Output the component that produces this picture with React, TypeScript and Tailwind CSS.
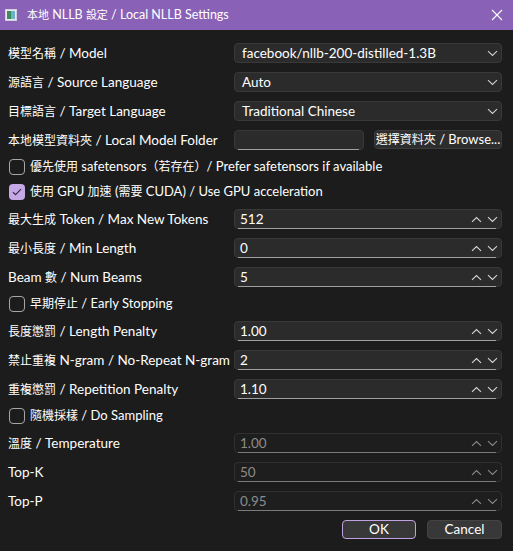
const FONT = "font-['Lato','Noto_Sans_CJK_TC',sans-serif]";

// CJK runs render a little smaller than the Latin text in the reference
function T({ text, cjk = "text-[12px]" }: { text: string; cjk?: string }) {
  const parts = text.split(/([\u3000-\u9fff\uff00-\uffef]+)/);
  return (
    <>
      {parts.map((p, i) =>
        i % 2 === 1 ? (
          <span key={i} className={cjk}>
            {p}
          </span>
        ) : (
          <span key={i}>{p}</span>
        )
      )}
    </>
  );
}

function ChevronDown({ className = "" }: { className?: string }) {
  return (
    <svg width="11" height="7" viewBox="0 0 11 7" className={className}>
      <path d="M1 1.2 L5.5 5.5 L10 1.2" fill="none" stroke="currentColor" strokeWidth="1.1" />
    </svg>
  );
}

function ChevronUp({ className = "" }: { className?: string }) {
  return (
    <svg width="11" height="7" viewBox="0 0 11 7" className={className}>
      <path d="M1 5.8 L5.5 1.5 L10 5.8" fill="none" stroke="currentColor" strokeWidth="1.1" />
    </svg>
  );
}

function Combo({ value }: { value: string }) {
  return (
    <div className="h-[20px] flex items-center justify-between rounded-[4px] border border-[#393939] bg-[#2b2b2b] pl-[7px] pr-[3px] text-[13.5px] text-white">
      <span>{value}</span>
      <ChevronDown className="text-[#d0d0d0]" />
    </div>
  );
}

function Spin({ value, disabled = false }: { value: string; disabled?: boolean }) {
  return (
    <div
      className={
        "relative h-[20px] flex items-center justify-between rounded-[4px] border pl-[5px] pr-[3px] text-[13.5px] " +
        (disabled ? "border-[#303030] bg-[#1e1e1e] text-[#8c8c8c]" : "border-[#393939] bg-[#2b2b2b] text-white")
      }
    >
      <span>{value}</span>
      <div className={"flex items-center gap-[5px] " + (disabled ? "text-[#8a8a8a]" : "text-[#d6d6d6]")}>
        <ChevronUp />
        <ChevronDown />
      </div>
      <div className={"absolute left-[3px] right-[5px] bottom-[-1px] h-[1px] " + (disabled ? "bg-[#7a7a7a]" : "bg-[#a0a0a0]")} />
    </div>
  );
}

function Check({ label, checked = false }: { label: string; checked?: boolean }) {
  return (
    <div className="col-span-2 h-[16px] flex items-center gap-[5px] pl-[1px] text-[13px] text-white whitespace-nowrap">
      {checked ? (
        <div className="w-[16px] h-[16px] rounded-[4px] bg-[#c5a9e6] flex items-center justify-center">
          <svg width="10" height="8" viewBox="0 0 10 8">
            <path d="M1 4.2 L3.6 6.6 L9 1.2" fill="none" stroke="#3a2a55" strokeWidth="1.2" />
          </svg>
        </div>
      ) : (
        <div className="w-[16px] h-[16px] rounded-[4px] border border-[#a6a6a6]" />
      )}
      <span>
        <T text={label} />
      </span>
    </div>
  );
}

function Label({ text }: { text: string }) {
  return (
    <div className="h-[20px] flex items-center text-[13.5px] text-white whitespace-nowrap">
      <span>
        <T text={text} />
      </span>
    </div>
  );
}

export default function App() {
  return (
    <div className={"w-[513px] h-[551px] bg-[#1c1c1c] flex flex-col " + FONT}>
      <div className="h-[30px] bg-[#8961b6] flex items-center pl-[5px] pr-[10px]">
        <svg width="12" height="12" viewBox="0 0 12 12">
          <rect x="0.5" y="0.5" width="11" height="11" fill="#e8e8f0" stroke="#cfd0dc" />
          <rect x="2" y="2" width="4" height="8" fill="#3d8a5c" />
          <rect x="6" y="2" width="4" height="8" fill="#6bb0c8" />
        </svg>
        <span className="ml-[10px] text-[12.5px] text-white whitespace-nowrap">
          <T text="本地 NLLB 設定 / Local NLLB Settings" cjk="text-[11px]" />
        </span>
        <svg width="12" height="12" viewBox="0 0 12 12" className="ml-auto">
          <path d="M1 1 L11 11 M11 1 L1 11" stroke="white" strokeWidth="1.1" />
        </svg>
      </div>

      <div className="grid grid-cols-[226px_268px] gap-y-[9px] pl-[8px] pt-[13px]">
        <Label text="模型名稱 / Model" />
        <Combo value="facebook/nllb-200-distilled-1.3B" />
        <Label text="源語言 / Source Language" />
        <Combo value="Auto" />
        <Label text="目標語言 / Target Language" />
        <Combo value="Traditional Chinese" />

        <Label text="本地模型資料夾 / Local Model Folder" />
        <div className="h-[20px] flex gap-[10px]">
          <div className="relative w-[130px] h-[20px] rounded-[4px] border border-[#393939] bg-[#2b2b2b]">
            <div className="absolute left-[3px] right-[4px] bottom-[-1px] h-[1px] bg-[#a0a0a0]" />
          </div>
          <div className="flex-1 h-[19px] rounded-[4px] border border-[#3c3c3c] bg-[#2d2d2d] flex items-center justify-center text-[13px] text-white whitespace-nowrap">
            <span>
              <T text="選擇資料夾 / Browse..." />
            </span>
          </div>
        </div>

        <Check label="優先使用 safetensors（若存在）/ Prefer safetensors if available" />
        <Check label="使用 GPU 加速 (需要 CUDA) / Use GPU acceleration" checked />

        <Label text="最大生成 Token / Max New Tokens" />
        <Spin value="512" />
        <Label text="最小長度 / Min Length" />
        <Spin value="0" />
        <Label text="Beam 數 / Num Beams" />
        <Spin value="5" />

        <Check label="早期停止 / Early Stopping" />

        <Label text="長度懲罰 / Length Penalty" />
        <Spin value="1.00" />
        <Label text="禁止重複 N-gram / No-Repeat N-gram" />
        <Spin value="2" />
        <Label text="重複懲罰 / Repetition Penalty" />
        <Spin value="1.10" />

        <Check label="隨機採樣 / Do Sampling" />

        <Label text="溫度 / Temperature" />
        <Spin value="1.00" disabled />
        <Label text="Top-K" />
        <Spin value="50" disabled />
        <Label text="Top-P" />
        <Spin value="0.95" disabled />

        <div />
        <div className="flex justify-end gap-[11px]">
          <button className="w-[74px] h-[19px] rounded-[4px] border border-[#bfa2df] bg-[#383838] text-[13.5px] text-white leading-none">
            OK
          </button>
          <button className="w-[75px] h-[19px] rounded-[4px] border border-[#444444] bg-[#383838] text-[13.5px] text-white leading-none">
            Cancel
          </button>
        </div>
      </div>
    </div>
  );
}
